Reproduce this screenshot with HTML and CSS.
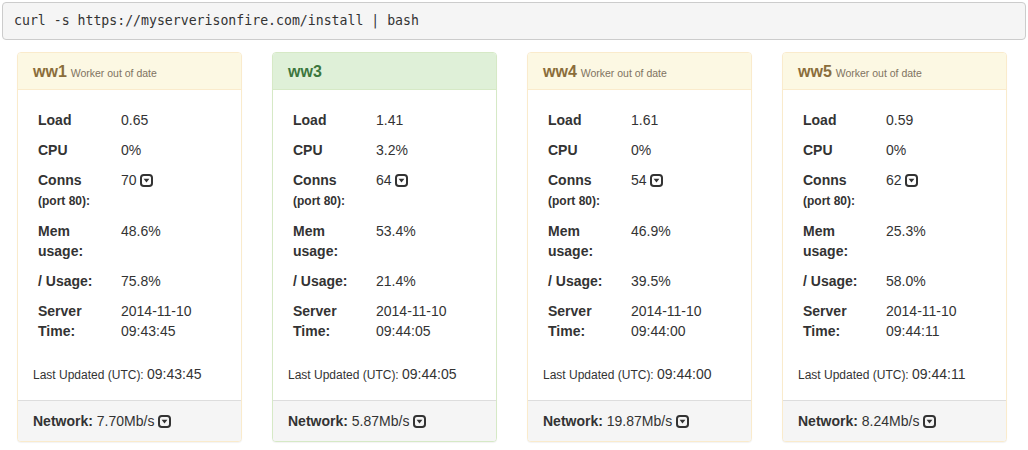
FILE: index.html
```html
<!DOCTYPE html>
<html>
<head>
<meta charset="utf-8">
<link rel="stylesheet" href="styles.css">
</head>
<body>
<div class="page">
  <pre class="cmd">curl -s https://myserverisonfire.com/install | bash</pre>
  <div class="row">
    <div class="col">
      <div class="panel warning">
        <div class="panel-heading"><span class="title">ww1</span> <small class="note">Worker out of date</small></div>
        <div class="panel-body">
          <table class="stats">
            <tr><th>Load</th><td>0.65</td></tr>
            <tr><th>CPU</th><td>0%</td></tr>
            <tr><th>Conns<br><small>(port 80):</small></th><td>70 <svg class="caret" viewBox="0 0 13 13"><rect x="1" y="1" width="11" height="11" rx="2.8"/><path d="M3.6 4.8H9.4L6.5 8.6Z"/></svg></td></tr>
            <tr><th>Mem<br>usage:</th><td>48.6%</td></tr>
            <tr><th>/ Usage:</th><td>75.8%</td></tr>
            <tr><th>Server<br>Time:</th><td>2014-11-10<br>09:43:45</td></tr>
          </table>
          <div class="updated">Last Updated (UTC): <span class="time">09:43:45</span></div>
        </div>
        <div class="panel-footer"><b>Network:</b> 7.70Mb/s <svg class="caret" viewBox="0 0 13 13"><rect x="1" y="1" width="11" height="11" rx="2.8"/><path d="M3.6 4.8H9.4L6.5 8.6Z"/></svg></div>
      </div>
    </div>
    <div class="col">
      <div class="panel success">
        <div class="panel-heading"><span class="title">ww3</span></div>
        <div class="panel-body">
          <table class="stats">
            <tr><th>Load</th><td>1.41</td></tr>
            <tr><th>CPU</th><td>3.2%</td></tr>
            <tr><th>Conns<br><small>(port 80):</small></th><td>64 <svg class="caret" viewBox="0 0 13 13"><rect x="1" y="1" width="11" height="11" rx="2.8"/><path d="M3.6 4.8H9.4L6.5 8.6Z"/></svg></td></tr>
            <tr><th>Mem<br>usage:</th><td>53.4%</td></tr>
            <tr><th>/ Usage:</th><td>21.4%</td></tr>
            <tr><th>Server<br>Time:</th><td>2014-11-10<br>09:44:05</td></tr>
          </table>
          <div class="updated">Last Updated (UTC): <span class="time">09:44:05</span></div>
        </div>
        <div class="panel-footer"><b>Network:</b> 5.87Mb/s <svg class="caret" viewBox="0 0 13 13"><rect x="1" y="1" width="11" height="11" rx="2.8"/><path d="M3.6 4.8H9.4L6.5 8.6Z"/></svg></div>
      </div>
    </div>
    <div class="col">
      <div class="panel warning">
        <div class="panel-heading"><span class="title">ww4</span> <small class="note">Worker out of date</small></div>
        <div class="panel-body">
          <table class="stats">
            <tr><th>Load</th><td>1.61</td></tr>
            <tr><th>CPU</th><td>0%</td></tr>
            <tr><th>Conns<br><small>(port 80):</small></th><td>54 <svg class="caret" viewBox="0 0 13 13"><rect x="1" y="1" width="11" height="11" rx="2.8"/><path d="M3.6 4.8H9.4L6.5 8.6Z"/></svg></td></tr>
            <tr><th>Mem<br>usage:</th><td>46.9%</td></tr>
            <tr><th>/ Usage:</th><td>39.5%</td></tr>
            <tr><th>Server<br>Time:</th><td>2014-11-10<br>09:44:00</td></tr>
          </table>
          <div class="updated">Last Updated (UTC): <span class="time">09:44:00</span></div>
        </div>
        <div class="panel-footer"><b>Network:</b> 19.87Mb/s <svg class="caret" viewBox="0 0 13 13"><rect x="1" y="1" width="11" height="11" rx="2.8"/><path d="M3.6 4.8H9.4L6.5 8.6Z"/></svg></div>
      </div>
    </div>
    <div class="col">
      <div class="panel warning">
        <div class="panel-heading"><span class="title">ww5</span> <small class="note">Worker out of date</small></div>
        <div class="panel-body">
          <table class="stats">
            <tr><th>Load</th><td>0.59</td></tr>
            <tr><th>CPU</th><td>0%</td></tr>
            <tr><th>Conns<br><small>(port 80):</small></th><td>62 <svg class="caret" viewBox="0 0 13 13"><rect x="1" y="1" width="11" height="11" rx="2.8"/><path d="M3.6 4.8H9.4L6.5 8.6Z"/></svg></td></tr>
            <tr><th>Mem<br>usage:</th><td>25.3%</td></tr>
            <tr><th>/ Usage:</th><td>58.0%</td></tr>
            <tr><th>Server<br>Time:</th><td>2014-11-10<br>09:44:11</td></tr>
          </table>
          <div class="updated">Last Updated (UTC): <span class="time">09:44:11</span></div>
        </div>
        <div class="panel-footer"><b>Network:</b> 8.24Mb/s <svg class="caret" viewBox="0 0 13 13"><rect x="1" y="1" width="11" height="11" rx="2.8"/><path d="M3.6 4.8H9.4L6.5 8.6Z"/></svg></div>
      </div>
    </div>
  </div>
</div>
</body>
</html>
```
FILE: styles.css
```css
* { box-sizing: border-box; }
html, body { margin: 0; padding: 0; background: #fff; }
body {
  font-family: "Liberation Sans", Arial, sans-serif;
  font-size: 14px;
  line-height: 20px;
  color: #333;
}
.page { padding: 2px; }
.cmd {
  margin: 0 0 12px;
  padding: 9px 11px;
  font-family: "DejaVu Sans Mono", "Liberation Mono", monospace;
  font-size: 13.2px;
  line-height: 18px;
  color: #333;
  background: #f5f5f5;
  border: 1px solid #ccc;
  border-radius: 4px;
}
.row { display: flex; }
.col { width: 255px; padding: 0 15px; }
.panel {
  border: 1px solid #ddd;
  border-radius: 4px;
  background: #fff;
  box-shadow: 0 1px 1px rgba(0,0,0,0.05);
  overflow: hidden;
}
.panel-heading {
  padding: 10px 15px;
  border-bottom: 1px solid transparent;
  height: 37px;
  line-height: 17px;
}
.title { font-size: 16px; font-weight: bold; }
.note { font-size: 10.5px; }
.warning { border-color: #faebcc; }
.warning .panel-heading { background: #fcf8e3; border-color: #faebcc; color: #8a6d3b; }
.warning .note { color: #7f7361; }
.success { border-color: #d6e9c6; }
.success .panel-heading { background: #dff0d8; border-color: #d6e9c6; color: #3c763d; }
.panel-body { padding: 15px; }
.stats { border-collapse: collapse; width: 100%; margin-bottom: 18px; }
.stats th, .stats td { padding: 5px; vertical-align: top; text-align: left; line-height: 20px; }
.stats th { width: 83px; font-weight: bold; }
.stats th small { font-size: 12px; }
.updated { font-size: 12px; line-height: 20px; }
.updated .time { font-size: 14px; }
.panel-footer {
  padding: 10px 15px;
  background: #f5f5f5;
  border-top: 1px solid #ddd;
  line-height: 20px;
}
.caret {
  width: 13px; height: 13px;
  vertical-align: -2px;
}
.caret rect { fill: none; stroke: #333; stroke-width: 2; }
.caret path { fill: #333; }
```
